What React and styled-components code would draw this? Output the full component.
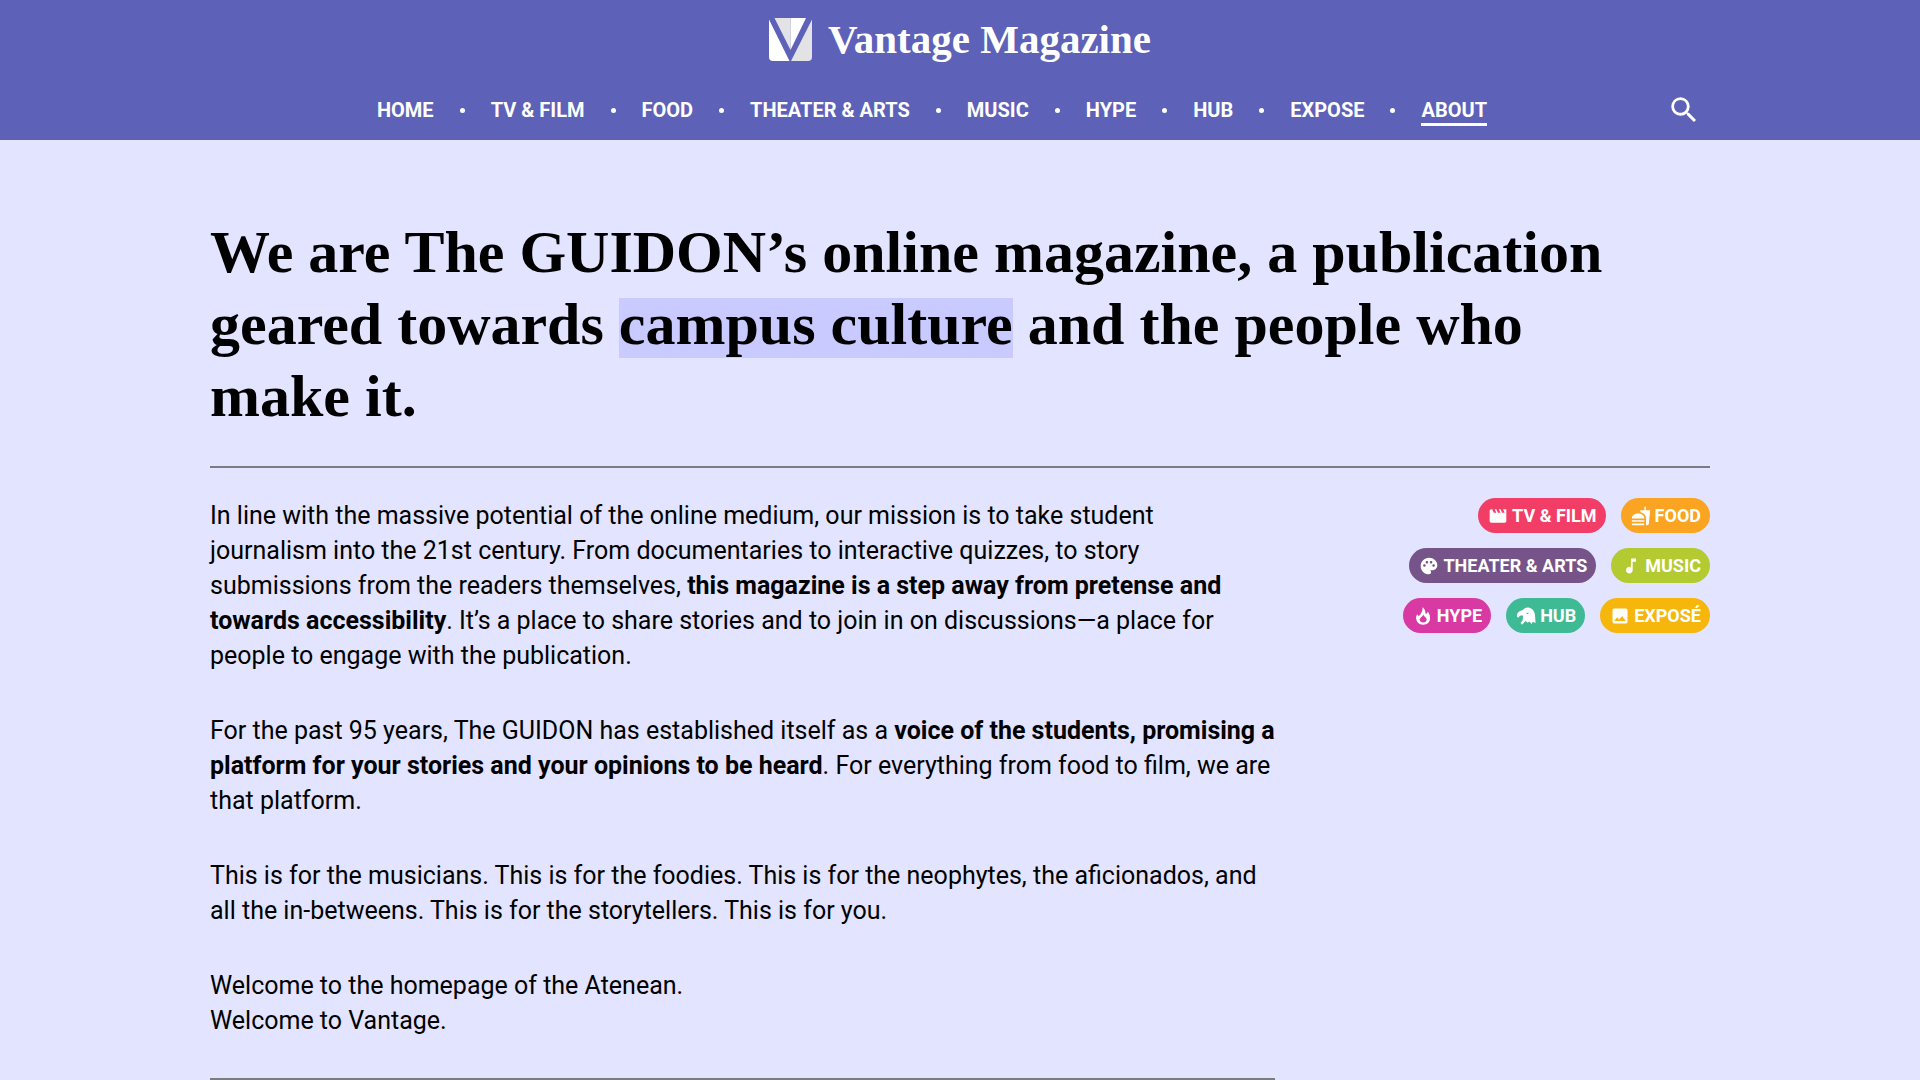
import React from 'react';
import styled, { createGlobalStyle } from 'styled-components';
import { MdSearch, MdMovie, MdFastfood, MdPalette, MdMusicNote, MdImage } from 'react-icons/md';

const GlobalStyle = createGlobalStyle`
  *, *::before, *::after { box-sizing: border-box; }
  body {
    margin: 0;
    background: #e3e4ff;
    color: #000;
    font-family: Roboto, "Noto Sans", sans-serif;
  }
  a { color: inherit; text-decoration: none; }
`;

const Header = styled.header`
  background: #5d61b8;
  color: #fff;
  padding: 18px 24px 8px;
`;

const Brand = styled.a`
  display: flex;
  align-items: center;
  justify-content: center;
  gap: 16px;
  height: 43px;
  font: bold 41px/43px "Liberation Serif", serif;
`;

const NavBar = styled.div`
  display: flex;
  align-items: center;
  max-width: 1500px;
  margin: 27px auto 0;
`;

const NavList = styled.ul`
  flex: 1;
  display: flex;
  justify-content: center;
  align-items: center;
  gap: 26px;
  margin: 0;
  padding: 0;
  list-style: none;
`;

const NavItem = styled.li`
  display: flex;
  align-items: center;
  gap: 26px;

  &:not(:first-child)::before {
    content: '';
    width: 5px;
    height: 5px;
    border-radius: 50%;
    background: #fff;
  }
`;

const NavLink = styled.a`
  padding-top: 3px;
  border-bottom: 3px solid ${(p) => (p.$active ? '#fff' : 'transparent')};
  font-size: 20px;
  font-weight: 700;
  line-height: 26px;
`;

const SearchButton = styled.button`
  display: flex;
  align-items: center;
  justify-content: center;
  width: 56px;
  height: 44px;
  padding: 0 0 0 4px;
  border: 0;
  background: none;
  color: inherit;
  font-size: 34px;
  cursor: pointer;
`;

const Main = styled.main`
  max-width: 1548px;
  margin: 0 auto;
  padding: 76px 24px 0;
`;

const Headline = styled.h1`
  margin: 0;
  padding: 0 48px 34px 0;
  border-bottom: 2px solid #7c7c80;
  font: bold 60px/72px "Liberation Serif", serif;
`;

const Highlight = styled.mark`
  padding-bottom: 1px;
  background: linear-gradient(transparent 7px, #c9caff 7px);
  color: inherit;
`;

const Columns = styled.div`
  display: flex;
  align-items: flex-start;
  justify-content: space-between;
  padding-top: 30px;
`;

const Story = styled.article`
  flex: 0 1 1065px;
  padding-bottom: 40px;
  border-bottom: 2px solid #7c7c80;
  font-size: 25px;
  line-height: 35px;
`;

const Paragraph = styled.p`
  margin: 0;
  & + & { margin-top: 40px; }
`;

const Tags = styled.nav`
  flex: 0 0 320px;
  display: flex;
  flex-wrap: wrap;
  justify-content: flex-end;
  gap: 15px;
`;

const Tag = styled.a`
  display: flex;
  align-items: center;
  gap: 4px;
  height: 35px;
  padding: 0 9px 0 10px;
  border-radius: 18px;
  background: ${(p) => p.$color};
  color: #fff;
  font-size: 18px;
  font-weight: 700;

  svg { width: 20px; height: 20px; }
`;

const Logo = () => (
  <svg width="43" height="43" viewBox="0 0 43 43" aria-hidden="true">
    <path d="M0 1.5 20.5 43H4a4 4 0 0 1-4-4z" fill="#fff" />
    <path d="M43 1.5 22 43h17a4 4 0 0 0 4-4z" fill="#e3e3e5" />
    <path d="M5.500 0H21.500V32z" fill="#e3e3e5" />
    <path d="M37 0H21.500V32z" fill="#fff" />
  </svg>
);

const Flame = () => (
  <svg viewBox="0 0 24 24" fill="currentColor" aria-hidden="true">
    <path
      fillRule="evenodd"
      d="M11.500 1.500C15 4 14.500 7.500 15.500 9.500C16.800 9 17.500 8 17.800 7C19.800 9.500 20.500 12 20.500 14.500C20.500 19.500 17 22.500 12.200 22.500C7.200 22.500 3.700 19 3.700 14.500C3.700 12.500 4.300 11 5.200 9.800C5.700 11 6.300 11.700 7.200 12C9.500 9.500 11.800 6 11.500 1.500ZM12.200 10.500C11.500 13 8 14 8 16.500C8 18.500 9.800 19.700 12.200 19.700C14.600 19.700 16.400 18.500 16.400 16.200C16.400 13.800 13.500 13 12.200 10.500Z"
    />
  </svg>
);

const Eagle = () => (
  <svg viewBox="0 0 24 24" fill="currentColor" aria-hidden="true">
    <path
      fillRule="evenodd"
      d="M1 12C1 8 4 5.500 8 5C10 2.500 13 1.500 16 2C20 3 22.500 7 22.800 11L23.500 20.500L20 19L19 21.500L16 18.500L14 20L11.500 18L7 22.500L5.500 20.500L8 17L8.500 12C7 11 4 11.500 3 14C1.800 13.500 1 13 1 12ZM11.500 8L14 10L15.500 8.500Z"
    />
  </svg>
);

const links = ['HOME', 'TV & FILM', 'FOOD', 'THEATER & ARTS', 'MUSIC', 'HYPE', 'HUB', 'EXPOSE', 'ABOUT'];

const tags = [
  { label: 'TV & FILM', color: '#f23d67', Icon: MdMovie },
  { label: 'FOOD', color: '#faa421', Icon: MdFastfood },
  { label: 'THEATER & ARTS', color: '#765388', Icon: MdPalette },
  { label: 'MUSIC', color: '#b3ca30', Icon: MdMusicNote },
  { label: 'HYPE', color: '#d939a2', Icon: Flame },
  { label: 'HUB', color: '#3eba94', Icon: Eagle },
  { label: 'EXPOSÉ', color: '#f6b60b', Icon: MdImage },
];

export default function App() {
  return (
    <>
      <GlobalStyle />
      <Header>
        <Brand href="#">
          <Logo />
          Vantage Magazine
        </Brand>
        <NavBar>
          <NavList>
            {links.map((label) => (
              <NavItem key={label}>
                <NavLink href="#" $active={label === 'ABOUT'}>{label}</NavLink>
              </NavItem>
            ))}
          </NavList>
          <SearchButton type="button" aria-label="Search"><MdSearch /></SearchButton>
        </NavBar>
      </Header>
      <Main>
        <Headline>
          We are The GUIDON’s online magazine, a publication geared towards{' '}
          <Highlight>campus culture</Highlight> and the people who make it.
        </Headline>
        <Columns>
          <Story>
            <Paragraph>
              In line with the massive potential of the online medium, our mission is to take student
              journalism into the 21st century. From documentaries to interactive quizzes, to story
              submissions from the readers themselves, <b>this magazine is a step away from pretense
              and towards accessibility</b>. It’s a place to share stories and to join in on
              discussions—a place for people to engage with the publication.
            </Paragraph>
            <Paragraph>
              For the past 95 years, The GUIDON has established itself as a <b>voice of the students,
              promising a platform for your stories and your opinions to be heard</b>. For everything
              from food to film, we are that platform.
            </Paragraph>
            <Paragraph>
              This is for the musicians. This is for the foodies. This is for the neophytes, the
              aficionados, and all the in-betweens. This is for the storytellers. This is for you.
            </Paragraph>
            <Paragraph>
              Welcome to the homepage of the Atenean.
              <br />
              Welcome to Vantage.
            </Paragraph>
          </Story>
          <Tags aria-label="Sections">
            {tags.map(({ label, color, Icon }) => (
              <Tag key={label} href="#" $color={color}>
                <Icon />
                {label}
              </Tag>
            ))}
          </Tags>
        </Columns>
      </Main>
    </>
  );
}
